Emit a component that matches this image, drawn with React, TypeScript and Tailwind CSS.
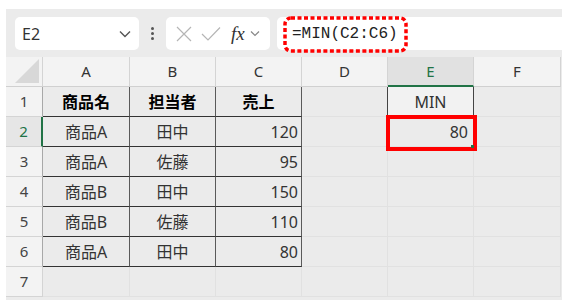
import React from "react";

const FONT = '"Noto Sans", "Noto Sans CJK JP", sans-serif';

const data: [string, string, string][] = [
  ["商品A", "田中", "120"],
  ["商品A", "佐藤", "95"],
  ["商品B", "田中", "150"],
  ["商品B", "佐藤", "110"],
  ["商品A", "田中", "80"],
];

function Chevron() {
  return (
    <svg width="12" height="8" viewBox="0 0 12 8">
      <path d="M1 1.5 L6 6.5 L11 1.5" fill="none" stroke="#555" strokeWidth="1.4" />
    </svg>
  );
}

export default function App() {
  const cols = ["A", "B", "C", "D", "E", "F"];
  const rows = [1, 2, 3, 4, 5, 6, 7];

  const cell = (r: number, c: number) => {
    const inTable = r >= 1 && r <= 6 && c >= 1 && c <= 3;
    let cls = "h-[30px] flex items-center text-[16px] text-[#333] ";
    let content: React.ReactNode = null;
    if (inTable) {
      cls += "border-r border-r-[#5a5a5a] border-b border-b-[#333] ";
      if (r === 1) {
        cls += "justify-center font-bold text-black ";
        content = ["商品名", "担当者", "売上"][c - 1];
      } else {
        const v = data[r - 2][c - 1];
        content = v;
        if (c === 3) cls += "justify-end pr-[3px] ";
        else cls += "justify-center ";
      }
    } else if (r === 1 && c === 4) {
      cls += "border-r border-r-[#444] border-b border-b-[#e1e1e1] ";
    } else if (r === 1 && c === 5) {
      cls += "bg-[#f2f2f2] border-r border-r-[#444] border-b border-b-[#333] justify-center ";
      content = "MIN";
    } else if (r === 2 && c === 5) {
      cls += "border-r border-r-[#e1e1e1] border-b border-b-[#e1e1e1] justify-end pr-[5px] ";
      content = "80";
    } else {
      cls += "border-r border-r-[#e1e1e1] border-b border-b-[#e1e1e1] ";
    }
    return (
      <div key={`${r}-${c}`} className={cls}>
        {content}
      </div>
    );
  };

  return (
    <div className="w-[571px] h-[308px] bg-white pt-[9px] pl-[6px]" style={{ fontFamily: FONT }}>
      <div className="relative w-[556px] h-[291px] bg-[#ebebeb] flex flex-col">
        {/* toolbar */}
        <div className="h-[48px] flex items-start pt-[8px] pl-[9px]">
          <div className="w-[124px] h-[33px] bg-white rounded-[5px] flex items-center justify-between pl-[7px] pr-[8px]">
            <span className="text-[16px] text-[#333]">E2</span>
            <Chevron />
          </div>
          <div className="w-[27px] h-[33px] flex flex-col items-center justify-center gap-[2px]">
            <div className="w-[3px] h-[3px] bg-[#555] rounded-full" />
            <div className="w-[3px] h-[3px] bg-[#555] rounded-full" />
            <div className="w-[3px] h-[3px] bg-[#555] rounded-full" />
          </div>
          <div className="w-[104px] h-[33px] bg-white rounded-[5px] flex items-center pl-[10px]">
            <svg width="16" height="16" viewBox="0 0 16 16">
              <path d="M1 1 L15 15 M15 1 L1 15" stroke="#b5b5b5" strokeWidth="1.2" fill="none" />
            </svg>
            <svg width="20" height="16" viewBox="0 0 20 16" className="ml-[9px]">
              <path d="M1 8 L7 14 L19 1.5" stroke="#b5b5b5" strokeWidth="1.2" fill="none" />
            </svg>
            <span
              className="ml-[10px] text-[19px] italic text-[#333] leading-none"
              style={{ fontFamily: '"Liberation Serif", "DejaVu Serif", serif' }}
            >
              fx
            </span>
            <svg width="10" height="7" viewBox="0 0 10 7" className="ml-[5px]">
              <path d="M1 1.5 L5 5.5 L9 1.5" fill="none" stroke="#888" strokeWidth="1.2" />
            </svg>
          </div>
          <div className="ml-[7px] flex-1 h-[33px] bg-white rounded-l-[5px] flex items-center pl-[15px]">
            <span
              className="text-[16px] text-[#222]"
              style={{ fontFamily: '"Liberation Mono", "DejaVu Sans Mono", monospace' }}
            >
              =MIN(C2:C6)
            </span>
          </div>
        </div>

        {/* grid */}
        <div className="relative grid grid-cols-[37px_87px_86px_86px_86px_86px_87px] w-[555px]">
          <div className="h-[30px] bg-[#f3f3f3] border-r border-r-[#d4d4d4] border-b border-b-[#d0d0d0] relative">
            <svg width="24" height="24" viewBox="0 0 24 24" className="absolute right-[3px] bottom-[3px]">
              <path d="M24 0 L24 24 L0 24 Z" fill="#d8d8d8" />
            </svg>
          </div>
          {cols.map((c) =>
            c === "E" ? (
              <div
                key={c}
                className="h-[30px] bg-[#e1e1e1] border-r border-r-[#d4d4d4] border-b-2 border-b-[#217346] flex items-center justify-center text-[15px] text-[#217346]"
              >
                {c}
              </div>
            ) : (
              <div
                key={c}
                className="h-[30px] bg-[#f3f3f3] border-r border-r-[#d4d4d4] border-b border-b-[#d0d0d0] flex items-center justify-center text-[15px] text-[#333]"
              >
                {c}
              </div>
            )
          )}
          {rows.map((r) => (
            <React.Fragment key={r}>
              {r === 2 ? (
                <div className="h-[30px] bg-[#e6e6e6] border-r-2 border-r-[#217346] border-b border-b-[#d4d4d4] flex items-center justify-center text-[15px] text-[#217346]">
                  {r}
                </div>
              ) : (
                <div
                  className={
                    r <= 6
                      ? "h-[30px] bg-[#f3f3f3] border-r border-r-[#a8a8a8] border-b border-b-[#d4d4d4] flex items-center justify-center text-[15px] text-[#444]"
                      : "h-[30px] bg-[#f3f3f3] border-r border-r-[#d4d4d4] border-b border-b-[#d4d4d4] flex items-center justify-center text-[15px] text-[#444]"
                  }
                >
                  {r}
                </div>
              )}
              {[1, 2, 3, 4, 5, 6].map((c) => cell(r, c))}
            </React.Fragment>
          ))}

          <div className="absolute left-[380px] top-[58px] w-[91px] h-[36px] border-[4px] border-[#ff0000]">
            <div className="absolute right-[-1px] bottom-[-1px] w-[3px] h-[3px] bg-[#217346]" />
          </div>
        </div>

        <svg
          className="absolute left-[277px] top-[7px]"
          width="125"
          height="37"
          viewBox="0 0 125 37"
        >
          <rect
            x="2"
            y="2"
            width="121"
            height="33"
            rx="6"
            fill="none"
            stroke="#ff0000"
            strokeWidth="3.5"
            strokeDasharray="4 2.5"
          />
        </svg>
      </div>
    </div>
  );
}
